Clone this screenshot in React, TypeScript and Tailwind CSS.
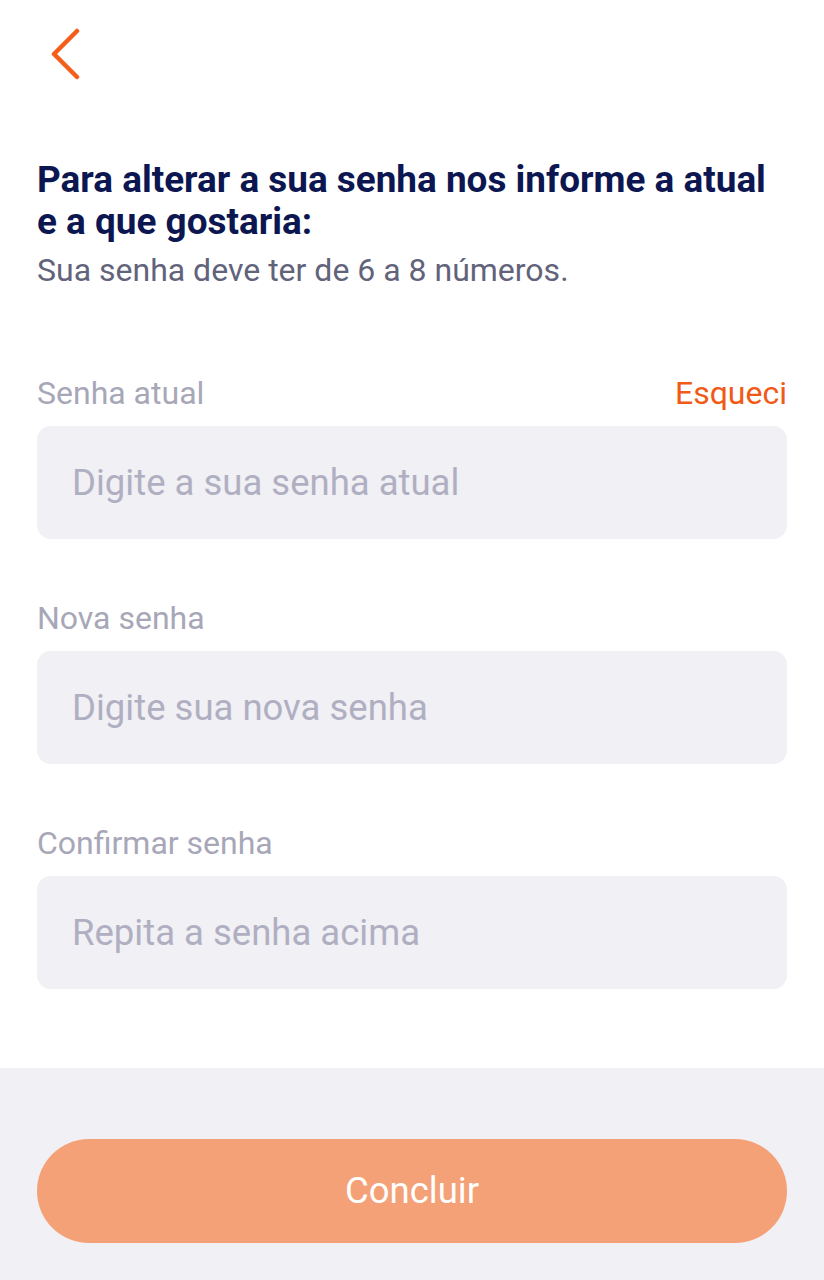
import React from "react";

const fields = [
  { id: "atual", label: "Senha atual", placeholder: "Digite a sua senha atual", forgot: true },
  { id: "nova", label: "Nova senha", placeholder: "Digite sua nova senha", forgot: false },
  { id: "confirmar", label: "Confirmar senha", placeholder: "Repita a senha acima", forgot: false },
];

const App = () => {
  return (
    <div className="flex h-[1280px] w-[824px] flex-col bg-white font-['Roboto',sans-serif]">
      <main className="flex-1 px-[37px]">
        {/* Back */}
        <button className="mt-[28px] ml-[12px] block" aria-label="Voltar">
          <svg width="32" height="52" viewBox="0 0 32 52" fill="none">
            <path
              d="M28 3 L5 26 L28 49"
              stroke="#f45d1a"
              strokeWidth="4.5"
              strokeLinecap="round"
              strokeLinejoin="round"
            />
          </svg>
        </button>

        {/* Header */}
        <div className="mt-[79px]">
          <h1 className="text-[36.9px] leading-[42px] font-bold text-[#0c1650]">
            Para alterar a sua senha nos informe a atual e a que gostaria:
          </h1>
          <p className="mt-[8px] text-[32px] leading-[38px] text-[#62637b]">
            Sua senha deve ter de 6 a 8 números.
          </p>
        </div>

        {/* Form */}
        <div className="mt-[85px] flex flex-col gap-[60px]">
          {fields.map((field) => (
            <div key={field.id} className="flex flex-col">
              <div className="flex items-center justify-between">
                <label className="text-[32px] leading-[38px] text-[#a7a7b8]">{field.label}</label>
                {field.forgot && (
                  <a className="text-[32px] leading-[38px] text-[#f05a16]">Esqueci</a>
                )}
              </div>
              <input
                placeholder={field.placeholder}
                className="mt-[14px] h-[113px] w-full rounded-[14px] bg-[#f0f0f5] px-[35px] text-[36.5px] text-[#333] outline-none placeholder:text-[#b0afc2]"
              />
            </div>
          ))}
        </div>
      </main>

      {/* Footer */}
      <footer className="h-[212px] bg-[#f0f0f5] px-[37px] pt-[71px]">
        <button className="h-[104px] w-full rounded-full bg-[#f5a178] text-[36.5px] text-white">
          Concluir
        </button>
      </footer>
    </div>
  );
};

export default App;
